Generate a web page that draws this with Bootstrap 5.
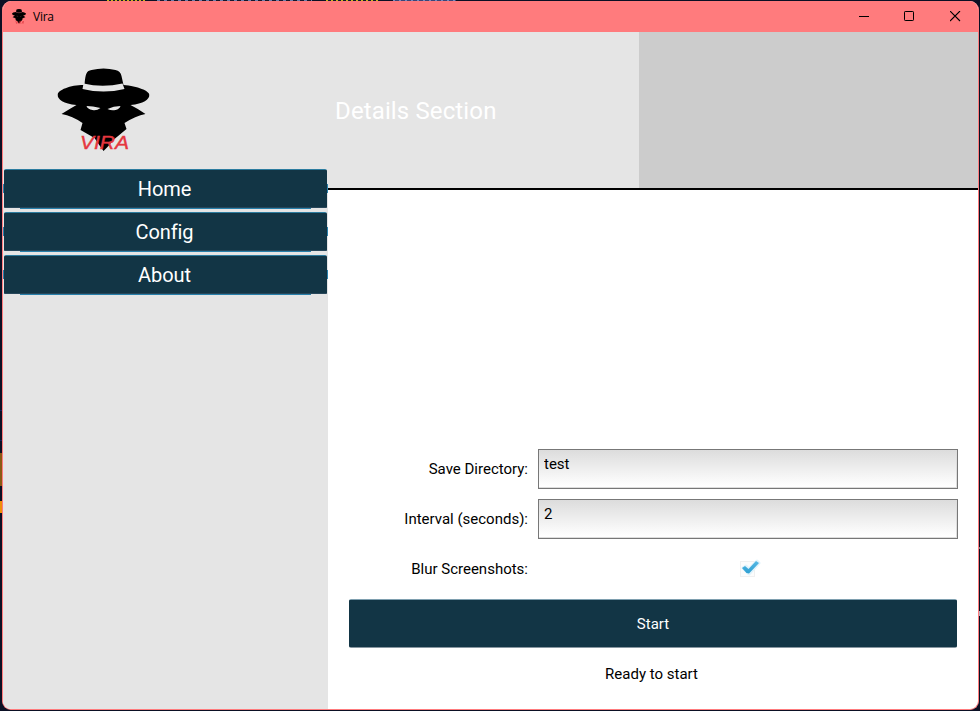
<!DOCTYPE html>
<html lang="en">
<head>
<meta charset="utf-8">
<meta name="viewport" content="width=device-width, initial-scale=1">
<title>Vira</title>
<link href="https://cdn.jsdelivr.net/npm/bootstrap@5.3.0/dist/css/bootstrap.min.css" rel="stylesheet">
<style>
body{width:980px;height:711px;overflow:hidden;font-family:Roboto,"Liberation Sans",sans-serif;color:#000;
 background:linear-gradient(#ef8f08,#ef8f08) 0 501px/2px 12px no-repeat,linear-gradient(#8a5a14,#8a5a14) 0 453px/2px 33px no-repeat,linear-gradient(#16205a,#16205a) 0 410px/2px 1px no-repeat,linear-gradient(#16205a,#16205a) 0 440px/2px 1px no-repeat,
 linear-gradient(#b9b3c0,#b9b3c0) 979px 611px/1px 5px no-repeat,linear-gradient(#8a8494,#8a8494) 979px 547px/1px 2px no-repeat,
 repeating-linear-gradient(90deg,#c9b41a 0 2px,#15182c 2px 4px) 107px 0/38px 1px no-repeat,
 repeating-linear-gradient(90deg,#6f7fae 0 3px,#15182c 3px 7px) 157px 0/155px 1px no-repeat,
 repeating-linear-gradient(90deg,#c9b41a 0 2px,#15182c 2px 5px) 326px 0/52px 1px no-repeat,
 repeating-linear-gradient(90deg,#7389bf 0 2px,#3b4577 2px 6px) 393px 0/63px 1px no-repeat,#0b1024}
.app-window{width:977px;height:709px;margin:1px 0 0 2px;border:1px solid #ff7b7d;border-top:0;border-radius:9px;background:#fff;overflow:hidden}
.titlebar{height:31px;background:#ff7b7d;padding-left:9px}
.app-name{font:12px/31px "Open Sans","Noto Sans",sans-serif;margin-left:7px;letter-spacing:-.25px}
.caption-icons{gap:35px;padding-right:17px}
.sidebar{width:325px;background:#e5e5e5}
.brand{height:137px;padding:30px 0 0 49px}
.nav-item-btn{height:40px;margin:0 1px 3px;border:0;border-radius:2px;background:linear-gradient(#2c7c9f 0 1px,#123545 1px 38px,#28475a 38px 39px,#2780ab 39px);color:#fff;font-size:20px;line-height:40px;padding:0 2px 0 0;text-align:center;position:relative;letter-spacing:-.1px}
.nav-item-btn::before,.nav-item-btn::after{content:"";position:absolute;top:15px;width:1px;height:9px;background:#2780ab}
.nav-item-btn::before{left:-1px}.nav-item-btn::after{right:-1px}
.nav-item-btn i{position:absolute;bottom:0;width:16px;height:1px;background:#e5e5e5}
.nav-item-btn i:first-of-type{left:0}.nav-item-btn i:last-of-type{right:0}
.details-head{height:158px;border-bottom:2px solid #000;background:#ccc}
.details-title{width:311px;background:#e5e5e5;color:#fff;font-size:24px;padding:2px 0 0 7px;letter-spacing:.13px}
.settings{padding:0 20px 17px 21px;font-size:15px;line-height:20px;letter-spacing:0}
.setting-row{height:40px;margin-bottom:10px}
.setting-label{width:179px;margin-right:10px;text-align:right;line-height:40px}
.check-cell{padding:0 0 3px 3px}
.text-entry{height:40px;border:1px solid #777;border-radius:0;background:linear-gradient(#dcdcdc,#fff 95%);box-shadow:inset -1px -1px #ddd;color:#000;font:inherit;padding:4px 5px 14px}
.start-btn{height:49px;width:608px;margin-bottom:8px;border:0;border-radius:2px;background:linear-gradient(#7e9faf 0 1px,#123545 1px 48px,#8796a0 48px);color:#fff;font:inherit;line-height:47px;padding:2px 0 0}
</style>
</head>
<body>
<svg class="d-none" xmlns="http://www.w3.org/2000/svg">
<symbol id="spy" viewBox="0 0 92 83">
<path d="M27 17C28 5 29 3 34 2Q46-1 58 2Q63 3 64 8L66 17C80 18 92 23 92 27C92 31 86 36 73 37Q81 41 88 46Q78 48 67 55L69 61L57 71L50 79L46 83L41 76L37 70L23 62L25 55Q15 48 4 46Q12 41 19 37C6 36 0 31 0 27C0 22 13 17 26 17Z"/>
<path d="M26 15.500Q45 20 65 15.500L67 21Q46 26 25 21ZM29 38Q35 38 43 40Q39 43 35 42Q30 41 29 38M63 38Q56 38 50 41Q54 43 58 42Q62 41 63 38" fill="var(--band,#e5e5e5)"/>
</symbol>
</svg>
<div class="app-window d-flex flex-column">
 <header class="titlebar d-flex align-items-center">
  <svg width="14" height="16" viewBox="0 0 92 90" preserveAspectRatio="none"><use href="#spy" width="92" height="83" style="--band:#5c3036"/><path d="M25 68l6 14 8-14m7 14 5-14h8l-4 6h-5l8 8m8 0 8-14v14" fill="none" stroke="#d5202b" stroke-width="3"/></svg>
  <span class="app-name">Vira</span>
  <div class="caption-icons d-flex ms-auto">
   <svg width="11" height="11" viewBox="0 0 11 11" fill="none" stroke="#000"><path d="M1 5.500h10"/></svg>
   <svg width="11" height="11" viewBox="0 0 11 11" fill="none" stroke="#000"><rect x=".5" y=".5" width="9" height="9" rx=".7"/></svg>
   <svg width="11" height="11" viewBox="0 0 11 11" fill="none" stroke="#000" stroke-width="1.100"><path d="M0 0l10 10m0-10-10 10"/></svg>
  </div>
 </header>
 <div class="d-flex flex-grow-1">
  <aside class="sidebar d-flex flex-column">
   <div class="brand">
    <svg width="105" height="95" viewBox="-5.500 -6 105 95"><use href="#spy" width="92" height="83"/><text x="22.500" y="81" font-family="'Liberation Sans'" font-size="19" font-style="italic" textLength="49" lengthAdjust="spacingAndGlyphs" fill="#e5373f" stroke="#e5373f" stroke-width=".4">VIRA</text></svg>
   </div>
   <button class="nav-item-btn">Home<i></i><i></i></button>
   <button class="nav-item-btn">Config<i></i><i></i></button>
   <button class="nav-item-btn">About<i></i><i></i></button>
  </aside>
  <main class="flex-grow-1 d-flex flex-column">
   <div class="details-head d-flex"><div class="details-title d-flex align-items-center"><span>Details Section</span></div></div>
   <form class="settings mt-auto d-flex flex-column">
    <div class="setting-row d-flex"><label class="setting-label" for="dir">Save Directory:</label><input id="dir" class="text-entry flex-grow-1" value="test"></div>
    <div class="setting-row d-flex"><label class="setting-label" for="sec">Interval (seconds):</label><input id="sec" class="text-entry flex-grow-1" value="2"></div>
    <div class="setting-row d-flex"><span class="setting-label">Blur Screenshots:</span>
     <div class="check-cell flex-grow-1 d-flex justify-content-center align-items-center">
      <svg width="22" height="22" viewBox="0 0 22 22"><defs><linearGradient id="blue" x2="0" y2="1"><stop stop-color="#55b8e4"/><stop offset="1" stop-color="#2f9fd2"/></linearGradient></defs><rect x="1.500" y="4.500" width="14" height="15" fill="#fcfcfc" stroke="#f0f0f0"/><path d="M4 11l3-2 3 3 8-8 2 2-10 11z" fill="none" stroke="#e0f3fb" stroke-width="3" stroke-linejoin="round"/><path d="M3 11l3-2 3.500 3 7.500-8 3 2L10 16.500 7.500 16z" fill="url(#blue)"/></svg>
     </div></div>
    <button type="button" class="start-btn">Start</button>
    <div class="text-center py-2 pe-1">Ready to start</div>
   </form>
  </main>
 </div>
</div>
<script src="https://cdn.jsdelivr.net/npm/bootstrap@5.3.0/dist/js/bootstrap.bundle.min.js"></script>
</body>
</html>
